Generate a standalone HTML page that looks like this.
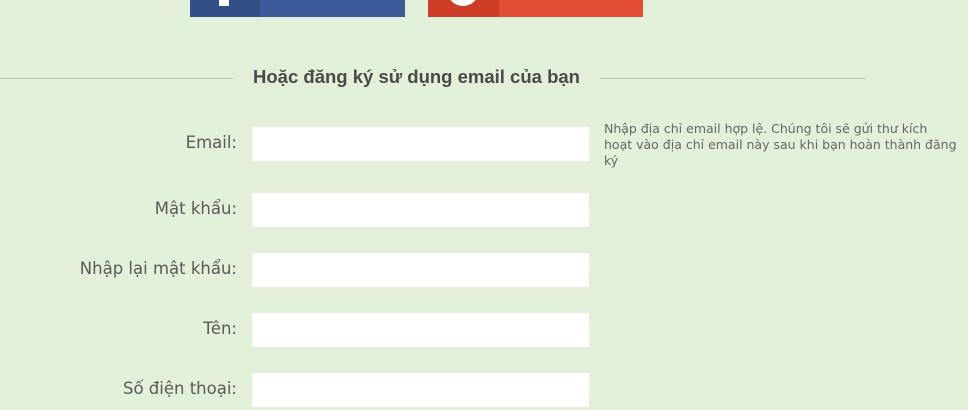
<!DOCTYPE html><html><head><meta charset="utf-8"><style>
body{margin:0;width:968px;height:410px;background:#e2efd9;position:relative;overflow:hidden;font-family:"Liberation Sans","DejaVu Sans",sans-serif;color:#555}
.a{position:absolute}
.l{position:absolute;right:731px;font-size:16.5px;font-family:"DejaVu Sans",sans-serif;color:#5a5a5a;white-space:nowrap}
.i{position:absolute;left:252px;width:337px;height:34px;background:#fff}
</style></head><body>
<div class="a" style="left:190px;top:0;width:215px;height:17px;background:#3b5a9a"></div>
<div class="a" style="left:190px;top:0;width:70px;height:17px;background:#344f88"></div>
<div class="a" style="left:219px;top:0;width:10px;height:6px;background:#fff"></div>
<div class="a" style="left:428px;top:0;width:215px;height:17px;background:#e04c34"></div>
<div class="a" style="left:428px;top:0;width:71px;height:17px;background:#cd3d27"></div>
<div class="a" style="left:447px;top:-26px;width:32px;height:32px;border-radius:50%;background:#fff"></div>
<div class="a" style="left:0;top:78px;width:233px;height:1px;background:#b9c6b0"></div>
<div class="a" style="left:600px;top:78px;width:266px;height:1px;background:#b9c6b0"></div>
<div class="a" style="left:233px;width:367px;top:66px;text-align:center;font-size:18.5px;font-weight:bold;color:#4a4a4a">Hoặc đăng ký sử dụng email của bạn</div>
<div class="l" style="top:133px">Email:</div><div class="i" style="top:127px"></div>
<div class="l" style="top:199px">Mật khẩu:</div><div class="i" style="top:193px"></div>
<div class="l" style="top:259px">Nhập lại mật khẩu:</div><div class="i" style="top:253px"></div>
<div class="l" style="top:319px">Tên:</div><div class="i" style="top:313px"></div>
<div class="l" style="top:379px">Số điện thoại:</div><div class="i" style="top:373px"></div>
<div class="a" style="left:604px;top:121px;width:362px;font-size:12.5px;line-height:16px;font-family:'DejaVu Sans',sans-serif;color:#666">Nhập địa chỉ email hợp lệ. Chúng tôi sẽ gửi thư kích<br>hoạt vào địa chỉ email này sau khi bạn hoàn thành đăng<br>ký</div>
</body></html>
